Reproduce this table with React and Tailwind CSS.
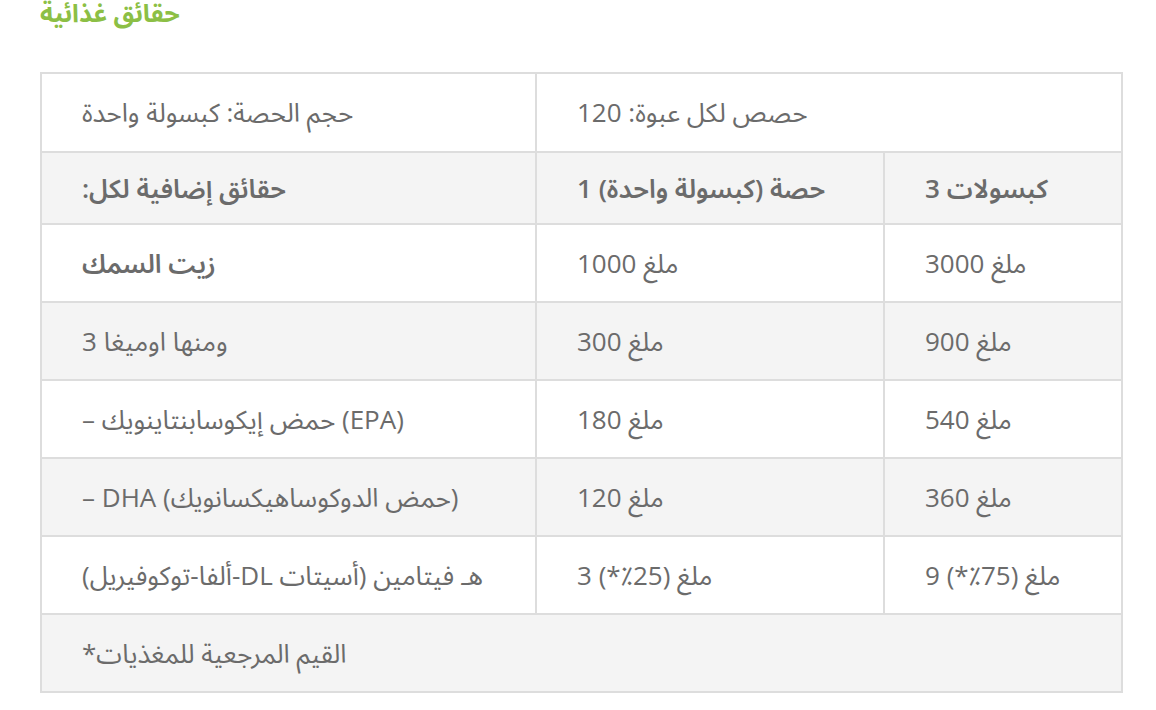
import React from "react";

const cell =
  "border-2 border-[#dddddd] pl-[40px] pr-4 text-left align-middle whitespace-nowrap";

function Row({ bg, h, children }) {
  return <tr className={`${bg} ${h}`}>{children}</tr>;
}

export default function App() {
  return (
    <div className="w-[1156px] h-[710px] bg-white overflow-hidden font-['Open_Sans','Noto_Sans_Arabic','Noto_Naskh_Arabic','DejaVu_Sans',sans-serif] text-[#6b6b6b]">
      <div className="pl-[40px]">
        <div className="h-[72px] pt-px">
          <h2
            dir="rtl"
            className="text-left text-[#8cbf45] font-bold text-[25px] leading-[26px] -mt-[2px]"
          >
            حقائق غذائية
          </h2>
        </div>
        <table className="w-[1083px] border-collapse table-fixed text-[26px]">
          <colgroup>
            <col className="w-[495px]" />
            <col className="w-[348px]" />
            <col />
          </colgroup>
          <tbody>
            <Row bg="bg-white" h="h-[79px]">
              <td dir="rtl" className={cell}>
                حجم الحصة: كبسولة واحدة
              </td>
              <td dir="rtl" colSpan={2} className={cell}>
                حصص لكل عبوة: 120
              </td>
            </Row>
            <Row bg="bg-[#f4f4f4]" h="h-[72px]">
              <td dir="rtl" className={`${cell} font-semibold`}>
                حقائق إضافية لكل:
              </td>
              <td dir="rtl" className={`${cell} font-semibold`}>
                حصة (كبسولة واحدة) 1
              </td>
              <td dir="rtl" className={`${cell} font-semibold`}>
                كبسولات 3
              </td>
            </Row>
            <Row bg="bg-white" h="h-[78px]">
              <td dir="rtl" className={`${cell} font-semibold`}>
                زيت السمك
              </td>
              <td dir="rtl" className={cell}>
                ملغ 1000
              </td>
              <td dir="rtl" className={cell}>
                ملغ 3000
              </td>
            </Row>
            <Row bg="bg-[#f4f4f4]" h="h-[78px]">
              <td dir="rtl" className={cell}>
                ومنها اوميغا 3
              </td>
              <td dir="rtl" className={cell}>
                ملغ 300
              </td>
              <td dir="rtl" className={cell}>
                ملغ 900
              </td>
            </Row>
            <Row bg="bg-white" h="h-[78px]">
              <td dir="rtl" className={cell}>
                (EPA) حمض إيكوسابنتاينويك –
              </td>
              <td dir="rtl" className={cell}>
                ملغ 180
              </td>
              <td dir="rtl" className={cell}>
                ملغ 540
              </td>
            </Row>
            <Row bg="bg-[#f4f4f4]" h="h-[78px]">
              <td dir="rtl" className={cell}>
                (حمض الدوكوساهيكسانويك) DHA –
              </td>
              <td dir="rtl" className={cell}>
                ملغ 120
              </td>
              <td dir="rtl" className={cell}>
                ملغ 360
              </td>
            </Row>
            <Row bg="bg-white" h="h-[78px]">
              <td dir="rtl" className={cell}>
                هـ فيتامين (أسيتات DL-ألفا-توكوفيريل)
              </td>
              <td dir="rtl" className={cell}>
                ملغ (25٪*) 3
              </td>
              <td dir="rtl" className={cell}>
                ملغ (75٪*) 9
              </td>
            </Row>
            <Row bg="bg-[#f4f4f4]" h="h-[78px]">
              <td dir="rtl" colSpan={3} className={cell}>
                القيم المرجعية للمغذيات*
              </td>
            </Row>
          </tbody>
        </table>
      </div>
    </div>
  );
}
